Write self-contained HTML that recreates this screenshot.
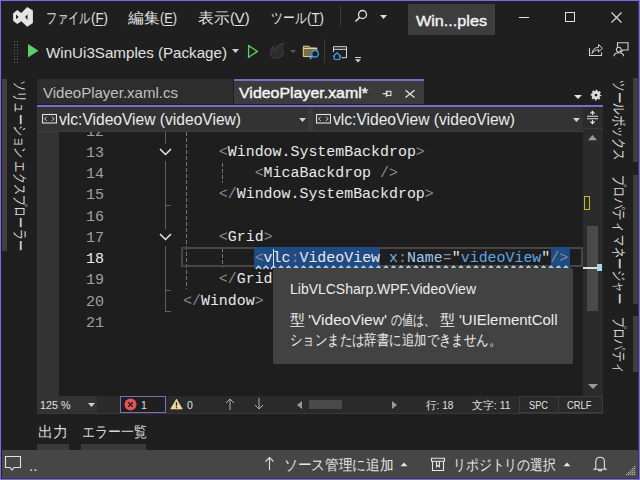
<!DOCTYPE html>
<html><head><meta charset="utf-8">
<style>
*{box-sizing:border-box;margin:0;padding:0}
html,body{width:640px;height:480px;overflow:hidden;background:#1f1f1f}
body{position:relative;font-family:"Liberation Sans",sans-serif;color:#e0e0e0}
.a{position:absolute}
.t{position:absolute;white-space:pre;line-height:1}
.f{display:inline-block;white-space:pre;transform-origin:0 50%}
.v{position:absolute;white-space:pre;line-height:1;transform-origin:0 0}
.mono{font-family:"Liberation Mono",monospace}
u{text-decoration:none;border-bottom:1px solid currentColor;line-height:0.9;display:inline-block}
</style></head><body>

<!-- TITLE BAR -->
<div class="a" style="left:0;top:0;width:640px;height:480px;border:1px solid #7d6ec0;z-index:50"></div>
<div class="a" style="left:1px;top:1px;width:638px;height:478px;border:1px solid #1d1850;border-right-color:#3a3270;border-bottom-color:#3a3270;z-index:49"></div>
<svg class="a" style="left:0;top:0" width="40" height="32" viewBox="0 0 40 32">
  <path fill="#e4e4e4" fill-rule="evenodd" d="M27.2 7 L32.9 10.5 V22.9 L27.2 26.7 L21.3 21.3 L17.2 24 L13.1 20.8 V13.5 L17.2 10 L21.3 12.9 Z M16.1 14.6 V19.2 L18.6 16.9 Z M27.5 14.3 V20 L25.1 17 Z"/>
</svg>
<div class="t" style="left:46px;top:10px;font-size:15px"><span class="f" style="width:44.50px;transform:scaleX(0.7417)">ファイル</span><span class="f" style="width:17.00px;transform:scaleX(0.8867)">(<u>F</u>)</span></div>
<div class="t" style="left:128px;top:10px;font-size:15px"><span class="f" style="width:31.50px;transform:scaleX(1.0500)">編集</span><span class="f" style="width:17.00px;transform:scaleX(0.8493)">(<u>E</u>)</span></div>
<div class="t" style="left:198px;top:10px;font-size:15px"><span class="f" style="width:31.50px;transform:scaleX(1.0500)">表示</span><span class="f" style="width:19.50px;transform:scaleX(0.9742)">(<u>V</u>)</span></div>
<div class="t" style="left:271px;top:10px;font-size:15px"><span class="f" style="width:35.50px;transform:scaleX(0.7889)">ツール</span><span class="f" style="width:17.00px;transform:scaleX(0.8867)">(<u>T</u>)</span></div>
<div class="a" style="left:340px;top:6px;width:1px;height:20px;background:#3a3a3a"></div>
<svg class="a" style="left:354px;top:9px" width="14" height="14" viewBox="0 0 14 14"><circle cx="8.5" cy="5.5" r="4" fill="none" stroke="#e0e0e0" stroke-width="1.3"/><path d="M5.6 8.4 L1.5 12.5" stroke="#e0e0e0" stroke-width="1.5"/></svg>
<svg class="a" style="left:380px;top:15px" width="8" height="5"><path d="M0 0 H7 L3.5 4 Z" fill="#e0e0e0"/></svg>
<div class="a" style="left:408px;top:4px;width:87px;height:31px;background:#3d3d3d"></div>
<div class="t" style="left:416px;top:12.7px;font-size:15.5px;-webkit-text-stroke:0.4px #f4f4f4;color:#f4f4f4"><span class="f" style="width:71.00px;transform:scaleX(1.0432)">Win...ples</span></div>
<div class="a" style="left:519px;top:17px;width:10px;height:1px;background:#e0e0e0"></div>
<div class="a" style="left:565px;top:12px;width:10px;height:10px;border:1px solid #e0e0e0"></div>
<svg class="a" style="left:611px;top:12px" width="11" height="11"><path d="M0.5 0.5 L10.5 10.5 M10.5 0.5 L0.5 10.5" stroke="#e0e0e0" stroke-width="1.1"/></svg>

<!-- TOOLBAR -->
<div class="a" style="left:13px;top:40px;width:6px;height:23px;background-image:radial-gradient(circle,#6a6a6a 0.8px,transparent 1px);background-size:3px 3px"></div>
<svg class="a" style="left:28px;top:44px" width="11" height="14"><path d="M0 0 L10.5 6.8 L0 13.5 Z" fill="#5fce6a"/></svg>
<div class="t" style="left:45.5px;top:44.7px;font-size:15.5px"><span class="f" style="width:181.00px;transform:scaleX(0.9772)">WinUi3Samples (Package)</span></div>
<svg class="a" style="left:232px;top:49px" width="8" height="5"><path d="M0 0 H7 L3.5 4 Z" fill="#d0d0d0"/></svg>
<svg class="a" style="left:0;top:30px" width="640" height="40" viewBox="0 30 640 40">
<path d="M248.6 45.6 L257.4 51.4 L248.6 57.2 Z" fill="none" stroke="#5cd05c" stroke-width="1.3" stroke-linejoin="miter"/>
<path d="M276.5 58.3 C272.5 58.3 270.3 55.5 270.3 52.5 C270.3 49.5 272 47.8 273.3 46.5 C273.3 48.6 274.2 49.6 275.2 50.2 C275.6 47 278.5 44.5 283.3 43.5 C281.3 45.5 282 48.5 283 50.8 C284.3 54.5 281.5 58.3 276.5 58.3 Z" fill="#2c2c2c" stroke="#3c3c3c" stroke-width="1.2"/>
<path d="M290 50 H296 L293 53 Z" fill="#5a5a5a"/>
<path d="M303.3 46.2 H309 L310.5 48 H316.8 V56.6 H303.3 Z" fill="#7d6d48" stroke="#ead290" stroke-width="1"/>
<path d="M303.3 48.5 H316.8" stroke="#ead290" stroke-width="1"/>
<circle cx="315" cy="53.8" r="3.3" fill="#1f1f1f" stroke="#3c9ae8" stroke-width="1.3"/>
<path d="M312.6 56.2 L309.6 59.3" stroke="#3c9ae8" stroke-width="1.4"/>
<path d="M333.5 52 V46.7 H346.5 V57.7 H341.5 M333.5 49.3 H346.5" fill="none" stroke="#d8d8d8" stroke-width="1"/>
<path d="M333 56.5 L337 52.8 L341 56.5 M334.3 55.5 V59.5 H339.7 V55.5" fill="#1f1f1f" stroke="#3c9ae8" stroke-width="1.2"/>
<path d="M355 57.5 H361" stroke="#d0d0d0" stroke-width="1"/>
<path d="M355 59.3 H361 L358 62.5 Z" fill="#d0d0d0"/>
<path d="M589.5 48 V55.5 H601.5 V52.5" fill="none" stroke="#d0d0d0" stroke-width="1.1"/>
<path d="M592 53.5 C592.5 49.5 595 47.5 598.5 47.3 V44.5 L602.5 48.3 L598.5 52 V49.6 C596 49.8 593.5 51 592 53.5 Z" fill="none" stroke="#d0d0d0" stroke-width="1"/>
<path d="M617.5 47 V42.8 H628 V50 H623 L621 52" fill="none" stroke="#d0d0d0" stroke-width="1.1"/>
<path d="M623 50 V46 H624" fill="none" stroke="#d0d0d0" stroke-width="0"/>
<circle cx="618.8" cy="49.6" r="2.4" fill="#1f1f1f" stroke="#d0d0d0" stroke-width="1.1"/>
<path d="M614 56.3 C614 53.8 616 52.8 618.8 52.8 C621.6 52.8 623.6 53.8 623.6 56.3" fill="none" stroke="#d0d0d0" stroke-width="1.1"/>
</svg>
<div class="a" style="left:324px;top:39px;width:1px;height:24px;background:#3a3a3a"></div>

<!-- LEFT SIDEBAR -->
<div class="a" style="left:2px;top:79px;width:5px;height:172px;background:#3f3f3f"></div>
<div class="v" style="left:28px;top:80px;font-size:15px;color:#d8d8d8;transform:rotate(90deg) scaleX(0.7462)">ソリューション エクスプローラー</div>

<!-- RIGHT SIDEBAR -->
<div class="a" style="left:633px;top:78px;width:5px;height:84px;background:#3f3f3f"></div>
<div class="a" style="left:633px;top:175px;width:5px;height:129px;background:#3f3f3f"></div>
<div class="a" style="left:633px;top:316px;width:5px;height:56px;background:#3f3f3f"></div>
<div class="v" style="left:627px;top:80px;font-size:15px;color:#d8d8d8;transform:rotate(90deg) scaleX(0.7714)">ツールボックス</div>
<div class="v" style="left:627px;top:175px;font-size:15px;color:#d8d8d8;transform:rotate(90deg) scaleX(0.7625)">プロパティ マネージャー</div>
<div class="v" style="left:627px;top:317px;font-size:15px;color:#d8d8d8;transform:rotate(90deg) scaleX(0.7467)">プロパティ</div>

<!-- TABS -->
<div class="a" style="left:37px;top:79px;width:196px;height:26px;background:#2d2d2d"></div>
<div class="t" style="left:43px;top:85px;font-size:15px;color:#c0c0c0"><span class="f" style="width:135.00px;transform:scaleX(1.0015)">VideoPlayer.xaml.cs</span></div>
<div class="a" style="left:234px;top:79px;width:190px;height:26px;background:#3b3b3b;border-top:2px solid #7b6ec0"></div>
<div class="t" style="left:239px;top:85px;font-size:15px;-webkit-text-stroke:0.4px #f6f6f6;color:#f6f6f6"><span class="f" style="width:129.00px;transform:scaleX(1.0620)">VideoPlayer.xaml*</span></div>
<svg class="a" style="left:0;top:80px" width="640" height="26" viewBox="0 80 640 26"><path d="M382.7 93.6 H386.4 M386.4 90.8 V96.9" fill="none" stroke="#e0e0e0" stroke-width="1.1"/><rect x="386.9" y="91.3" width="4" height="4.2" fill="none" stroke="#e0e0e0" stroke-width="1.1"/>
<path d="M405.5 90.2 L414.5 97.5 M414.5 90.2 L405.5 97.5" stroke="#e0e0e0" stroke-width="1.3"/>
<path d="M574 95 H582 L578 99 Z" fill="#e0e0e0"/>
<circle cx="596" cy="95.1" r="2.75" fill="none" stroke="#e0e0e0" stroke-width="2.6"/><circle cx="596" cy="95.1" r="4.5" fill="none" stroke="#e0e0e0" stroke-width="1.6" stroke-dasharray="1.9 1.634" stroke-dashoffset="0.95"/></svg>
<div class="a" style="left:37px;top:104px;width:566px;height:1px;background:#1c1846"></div>
<div class="a" style="left:37px;top:105px;width:566px;height:2px;background:#7b6ec0"></div>
<div class="a" style="left:37px;top:107px;width:546px;height:1px;background:#403a70"></div>

<!-- NAV BAR -->
<div class="a" style="left:37px;top:107px;width:546px;height:25px;background:#333333"></div>
<div class="a" style="left:308px;top:107px;width:5px;height:25px;background:#3a3a3a"></div>
<div class="a" style="left:37px;top:131px;width:546px;height:1px;background:#3c3c3c"></div>
<svg class="a" style="left:41px;top:113px" width="16" height="11"><rect x="1.5" y="1.5" width="14" height="8.5" fill="none" stroke="#e0e0e0" stroke-width="1.1"/><path d="M5.6 3.8 L3.6 5.8 L5.6 7.8 M11 3.8 L13 5.8 L11 7.8" fill="none" stroke="#e0e0e0" stroke-width="1"/></svg>
<div class="t" style="left:59px;top:112.3px;font-size:16px;color:#eaeaea"><span class="f" style="width:182.00px;transform:scaleX(0.9745)">vlc:VideoView (videoView)</span></div>
<svg class="a" style="left:299px;top:118px" width="8" height="5"><path d="M0 0 H7 L3.5 4 Z" fill="#d0d0d0"/></svg>
<svg class="a" style="left:315px;top:113px" width="16" height="11"><rect x="1.5" y="1.5" width="14" height="8.5" fill="none" stroke="#e0e0e0" stroke-width="1.1"/><path d="M5.6 3.8 L3.6 5.8 L5.6 7.8 M11 3.8 L13 5.8 L11 7.8" fill="none" stroke="#e0e0e0" stroke-width="1"/></svg>
<div class="t" style="left:333px;top:112.3px;font-size:16px;color:#eaeaea"><span class="f" style="width:182.00px;transform:scaleX(0.9745)">vlc:VideoView (videoView)</span></div>
<svg class="a" style="left:573px;top:118px" width="8" height="5"><path d="M0 0 H7 L3.5 4 Z" fill="#d0d0d0"/></svg>


<!-- EDITOR -->
<div class="a" style="left:37px;top:132px;width:546px;height:264px;background:#1e1e1e"></div>
<div class="a" style="left:37px;top:132px;width:22px;height:264px;background:#333333"></div>
<!-- EDITOR DECOR -->
<div class="a" style="left:165px;top:132px;width:1px;height:12px;background:#606060"></div>
<svg class="a" style="left:159px;top:148px" width="13" height="8"><path d="M1 1 L6.5 6.5 L12 1" fill="none" stroke="#e8e8e8" stroke-width="1.5"/></svg>
<div class="a" style="left:165px;top:161px;width:1px;height:68px;background:#606060"></div>
<div class="a" style="left:165px;top:205px;width:6px;height:1px;background:#606060"></div>
<svg class="a" style="left:159px;top:233px" width="13" height="8"><path d="M1 1 L6.5 6.5 L12 1" fill="none" stroke="#e8e8e8" stroke-width="1.5"/></svg>
<div class="a" style="left:165px;top:246px;width:1px;height:66px;background:#606060"></div>
<div class="a" style="left:165px;top:290px;width:6px;height:1px;background:#606060"></div>
<div class="a" style="left:165px;top:311px;width:6px;height:1px;background:#606060"></div>
<div class="a" style="left:186px;top:132px;width:1px;height:157px;background:repeating-linear-gradient(to bottom,#747474 0 4px,transparent 4px 6px)"></div>
<div class="a" style="left:222px;top:163px;width:1px;height:20px;background:repeating-linear-gradient(to bottom,#747474 0 4px,transparent 4px 6px)"></div>
<div class="a" style="left:222px;top:248px;width:1px;height:20px;background:repeating-linear-gradient(to bottom,#747474 0 4px,transparent 4px 6px)"></div>
<div class="a" style="left:181px;top:247px;width:402px;height:20px;border:2px solid #464646"></div>
<div class="a" style="left:254px;top:247px;width:126px;height:21px;background:#1f4b85"></div>
<div class="a" style="left:551px;top:247px;width:19px;height:21px;background:#1f4b85"></div>
<svg class="a" style="left:255px;top:264.5px" width="316" height="5"><defs><pattern id="sq" x="0" y="0" width="7.5" height="5" patternUnits="userSpaceOnUse"><path d="M0.8 4 L3.5 1.2 L6.2 4" fill="none" stroke="#cfe6ff" stroke-width="1.3"/></pattern></defs><rect width="316" height="5" fill="url(#sq)"/></svg>
<div class="a" style="left:273px;top:249px;width:1px;height:18px;background:#e0e0e0"></div>

<!-- CODELINES -->
<div class="a" style="left:37px;top:132px;width:546px;height:264px;overflow:hidden">
<div class="mono" style="position:absolute;left:0;width:67px;text-align:right;top:-10.45px;height:21.25px;line-height:21.25px;font-size:15px;color:#a0a0a0;">12</div>
<div class="mono" style="position:absolute;left:146px;top:-11.45px;height:21.25px;line-height:21.25px;font-size:14.93px;white-space:pre"><span style="color:#8a8a8a"></span></div>
<div class="mono" style="position:absolute;left:0;width:67px;text-align:right;top:10.80px;height:21.25px;line-height:21.25px;font-size:15px;color:#a0a0a0;">13</div>
<div class="mono" style="position:absolute;left:146px;top:9.80px;height:21.25px;line-height:21.25px;font-size:14.93px;white-space:pre"><span style="color:#e8e8e8">    </span><span style="color:#8a8a8a">&lt;</span><span style="color:#e8e8e8">Window.SystemBackdrop</span><span style="color:#8a8a8a">&gt;</span></div>
<div class="mono" style="position:absolute;left:0;width:67px;text-align:right;top:32.05px;height:21.25px;line-height:21.25px;font-size:15px;color:#a0a0a0;">14</div>
<div class="mono" style="position:absolute;left:146px;top:31.05px;height:21.25px;line-height:21.25px;font-size:14.93px;white-space:pre"><span style="color:#e8e8e8">        </span><span style="color:#8a8a8a">&lt;</span><span style="color:#e8e8e8">MicaBackdrop</span><span style="color:#8a8a8a"> /&gt;</span></div>
<div class="mono" style="position:absolute;left:0;width:67px;text-align:right;top:53.30px;height:21.25px;line-height:21.25px;font-size:15px;color:#a0a0a0;">15</div>
<div class="mono" style="position:absolute;left:146px;top:52.30px;height:21.25px;line-height:21.25px;font-size:14.93px;white-space:pre"><span style="color:#e8e8e8">    </span><span style="color:#8a8a8a">&lt;/</span><span style="color:#e8e8e8">Window.SystemBackdrop</span><span style="color:#8a8a8a">&gt;</span></div>
<div class="mono" style="position:absolute;left:0;width:67px;text-align:right;top:74.55px;height:21.25px;line-height:21.25px;font-size:15px;color:#a0a0a0;">16</div>
<div class="mono" style="position:absolute;left:0;width:67px;text-align:right;top:95.80px;height:21.25px;line-height:21.25px;font-size:15px;color:#a0a0a0;">17</div>
<div class="mono" style="position:absolute;left:146px;top:94.80px;height:21.25px;line-height:21.25px;font-size:14.93px;white-space:pre"><span style="color:#e8e8e8">    </span><span style="color:#8a8a8a">&lt;</span><span style="color:#e8e8e8">Grid</span><span style="color:#8a8a8a">&gt;</span></div>
<div class="mono" style="position:absolute;left:0;width:67px;text-align:right;top:117.05px;height:21.25px;line-height:21.25px;font-size:15px;color:#ececec;">18</div>
<div class="mono" style="position:absolute;left:146px;top:116.05px;height:21.25px;line-height:21.25px;font-size:14.93px;white-space:pre"><span style="color:#e8e8e8">        </span><span style="color:#8a8a8a">&lt;</span><span style="color:#e8e8e8">vlc</span><span style="color:#8a8a8a">:</span><span style="color:#e8e8e8">VideoView</span><span style="color:#e8e8e8"> </span><span style="color:#74aee4">x</span><span style="color:#8a8a8a">:</span><span style="color:#9ccaf0">Name</span><span style="color:#8a8a8a">=</span><span style="color:#e8e8e8">"</span><span style="color:#5aa6e8">videoView</span><span style="color:#e8e8e8">"</span><span style="color:#8a8a8a">/&gt;</span></div>
<div class="mono" style="position:absolute;left:0;width:67px;text-align:right;top:138.30px;height:21.25px;line-height:21.25px;font-size:15px;color:#a0a0a0;">19</div>
<div class="mono" style="position:absolute;left:146px;top:137.30px;height:21.25px;line-height:21.25px;font-size:14.93px;white-space:pre"><span style="color:#e8e8e8">    </span><span style="color:#8a8a8a">&lt;/</span><span style="color:#e8e8e8">Grid</span><span style="color:#8a8a8a">&gt;</span></div>
<div class="mono" style="position:absolute;left:0;width:67px;text-align:right;top:159.55px;height:21.25px;line-height:21.25px;font-size:15px;color:#a0a0a0;">20</div>
<div class="mono" style="position:absolute;left:146px;top:158.55px;height:21.25px;line-height:21.25px;font-size:14.93px;white-space:pre"><span style="color:#8a8a8a">&lt;/</span><span style="color:#e8e8e8">Window</span><span style="color:#8a8a8a">&gt;</span></div>
<div class="mono" style="position:absolute;left:0;width:67px;text-align:right;top:180.80px;height:21.25px;line-height:21.25px;font-size:15px;color:#a0a0a0;">21</div>
</div>
<!-- /CODELINES -->
<!-- SCROLLBAR -->
<div class="a" style="left:583px;top:132px;width:20px;height:264px;background:#2b2b2b"></div>
<div class="a" style="left:583px;top:107px;width:20px;height:25px;background:#2b2b2b"></div>
<div class="a" style="left:583px;top:128px;width:20px;height:1px;background:#3a3a3a"></div>
<svg class="a" style="left:0;top:100px" width="640" height="30" viewBox="0 100 640 30"><path d="M587 116.3 H598 M587 118.8 H598 M592.5 111.5 V115 M592.5 120 V123.5 M590.3 113.6 L592.5 111.4 L594.7 113.6 M590.3 121.4 L592.5 123.6 L594.7 121.4" fill="none" stroke="#e0e0e0" stroke-width="1.1"/></svg>
<svg class="a" style="left:588px;top:135px" width="10" height="6"><path d="M0 5.3 L4.5 0 L9 5.3 Z" fill="#9a9a9a"/></svg>
<div class="a" style="left:587px;top:226px;width:11px;height:85px;background:#4a4a4a"></div>
<div class="a" style="left:584px;top:196px;width:6px;height:14px;border:1.5px solid #c8b030"></div>
<div class="a" style="left:583px;top:267px;width:15px;height:2px;background:#e0e0e0"></div>
<div class="a" style="left:597px;top:264px;width:5px;height:7px;background:#a8d8f0"></div>
<svg class="a" style="left:588px;top:384px" width="10" height="6"><path d="M0 0 L5 5 L10 0 Z" fill="#9a9a9a"/></svg>


<!-- TOOLTIP -->
<div class="a" style="left:273px;top:268px;width:300px;height:96px;background:#424242;border-radius:2px"></div>
<div class="t" style="left:290px;top:280.8px;font-size:15px;color:#ececec"><span class="f" style="width:186.00px;transform:scaleX(0.9320)">LibVLCSharp.WPF.VideoView</span></div>
<div class="t" style="left:290px;top:312.5px;font-size:14.5px;color:#ececec">型</div>
<div class="t" style="left:308px;top:312.5px;font-size:14.5px;color:#ececec"><span class="f" style="width:79.00px;transform:scaleX(1.0744)">'VideoView'</span></div>
<div class="t" style="left:391px;top:312.5px;font-size:14.5px;color:#ececec"><span class="f" style="width:44.00px;transform:scaleX(0.7333)">の値は、</span></div>
<div class="t" style="left:440px;top:312.5px;font-size:14.5px;color:#ececec">型</div>
<div class="t" style="left:459px;top:312.5px;font-size:14.5px;color:#ececec"><span class="f" style="width:98.50px;transform:scaleX(1.0319)">'UIElementColl</span></div>
<div class="t" style="left:290px;top:333px;font-size:14.5px;color:#ececec"><span class="f" style="width:211.00px;transform:scaleX(0.8275)">ションまたは辞書に追加できません。</span></div>

<!-- BOTTOM EDITOR BAR -->
<div class="a" style="left:37px;top:396px;width:566px;height:17px;background:#2a2a2a"></div>
<div class="a" style="left:37px;top:396px;width:60px;height:17px;background:#333333"></div>
<div class="a" style="left:37px;top:413px;width:566px;height:1px;background:#383838"></div>
<div class="t" style="left:40px;top:400px;font-size:10.5px;color:#e0e0e0"><span class="f" style="width:30.50px;transform:scaleX(1.0241)">125 %</span></div>
<svg class="a" style="left:88px;top:403px" width="8" height="5"><path d="M0 0 H7 L3.5 4 Z" fill="#d0d0d0"/></svg>
<div class="a" style="left:120px;top:396px;width:46px;height:17px;border:1px solid #7b6ec0;background:#1f1f1f"></div>
<svg class="a" style="left:124px;top:398px" width="13" height="13"><circle cx="6.5" cy="6.5" r="6" fill="#e8505a"/><path d="M4.2 4.2 L8.8 8.8 M8.8 4.2 L4.2 8.8" stroke="#1f1f1f" stroke-width="1.3"/></svg>
<div class="t" style="left:141px;top:400px;font-size:10.5px;color:#e0e0e0">1</div>
<svg class="a" style="left:170px;top:398px" width="14" height="12"><path d="M6.5 1 L12.3 11 H0.7 Z" fill="#f0d89a" stroke="#f0d89a" stroke-width="0.6" stroke-linejoin="round"/><path d="M6.5 4.3 V7.8 M6.5 8.8 V10.2" stroke="#1f1f1f" stroke-width="1.3"/></svg>
<div class="t" style="left:187px;top:400px;font-size:10.5px;color:#e0e0e0">0</div>
<svg class="a" style="left:225px;top:398px" width="10" height="13"><path d="M5 1 V12 M1 5 L5 1 L9 5" fill="none" stroke="#b0b0b0" stroke-width="1"/></svg>
<svg class="a" style="left:254px;top:398px" width="10" height="13"><path d="M5 0 V11 M1 7 L5 11 L9 7" fill="none" stroke="#b0b0b0" stroke-width="1"/></svg>
<svg class="a" style="left:297px;top:401px" width="6" height="9"><path d="M5 0 V8 L0 4 Z" fill="#9a9a9a"/></svg>
<div class="a" style="left:309px;top:400px;width:33px;height:9px;background:#4a4a4a"></div>
<svg class="a" style="left:392px;top:401px" width="6" height="9"><path d="M0 0 V8 L5 4 Z" fill="#9a9a9a"/></svg>
<div class="t" style="left:426px;top:400px;font-size:10.5px;color:#e0e0e0"><span class="f" style="width:27.50px;transform:scaleX(0.9644)">行: 18</span></div>
<div class="t" style="left:471.5px;top:400px;font-size:10.5px;color:#e0e0e0"><span class="f" style="width:38.50px;transform:scaleX(0.9939)">文字: 11</span></div>
<div class="a" style="left:519px;top:396px;width:40px;height:17px;border:1px solid #3c3c3c"></div>
<div class="t" style="left:529px;top:400px;font-size:10.5px;color:#e0e0e0"><span class="f" style="width:19.00px;transform:scaleX(0.8799)">SPC</span></div>
<div class="a" style="left:558px;top:396px;width:45px;height:17px;border:1px solid #3c3c3c"></div>
<div class="t" style="left:567px;top:400px;font-size:10.5px;color:#e0e0e0"><span class="f" style="width:24.50px;transform:scaleX(0.8934)">CRLF</span></div>

<!-- OUTPUT TABS -->
<div class="t" style="left:38px;top:424px;font-size:15px;color:#d8d8d8">出力</div>
<div class="t" style="left:82px;top:424px;font-size:15px;color:#d8d8d8"><span class="f" style="width:64.50px;transform:scaleX(0.8600)">エラー一覧</span></div>
<div class="a" style="left:37px;top:444px;width:32px;height:6px;background:#3a3a3a"></div>
<div class="a" style="left:81px;top:444px;width:65px;height:6px;background:#3a3a3a"></div>

<!-- STATUS BAR -->
<div class="a" style="left:0;top:450px;width:640px;height:30px;background:#464646"></div>
<svg class="a" style="left:4px;top:455px" width="18" height="18"><path d="M1.5 1.5 H16.5 V12.5 H10 L8 15 L6 12.5 H1.5 Z" fill="none" stroke="#e0e0e0" stroke-width="1.1"/></svg>
<div class="t" style="left:29px;top:458px;font-size:15px;color:#e0e0e0">..</div>
<svg class="a" style="left:264px;top:456px" width="11" height="15"><path d="M5.5 1.5 V14 M1.5 5.5 L5.5 1.5 L9.5 5.5" fill="none" stroke="#e0e0e0" stroke-width="1.1"/></svg>
<div class="t" style="left:283.5px;top:457px;font-size:15px;color:#e6e6e6"><span class="f" style="width:109.50px;transform:scaleX(0.9125)">ソース管理に追加</span></div>
<svg class="a" style="left:400px;top:461.5px" width="9" height="5"><path d="M0.5 4.3 L4 0.5 L7.5 4.3 Z" fill="#e8e8e8"/></svg>
<svg class="a" style="left:0;top:450px" width="640" height="30" viewBox="0 450 640 30"><path d="M431.5 458.3 H444.5 V461.3 H431.5 Z M432.5 461.3 V470.5 H443.5 V461.3 M436.6 461.5 V466.8 L438 465.5 L439.4 466.8 V461.5" fill="none" stroke="#e6e6e6" stroke-width="1.1"/></svg>
<div class="t" style="left:452.5px;top:457px;font-size:15px;color:#e6e6e6"><span class="f" style="width:103.00px;transform:scaleX(0.8583)">リポジトリの選択</span></div>
<svg class="a" style="left:563px;top:461.5px" width="9" height="5"><path d="M0.5 4.3 L4 0.5 L7.5 4.3 Z" fill="#e8e8e8"/></svg>
<svg class="a" style="left:0;top:440px" width="640" height="40" viewBox="0 440 640 40"><path d="M595.8 467.8 V461.5 C595.8 459 597.6 457.3 600.1 457.3 C602.6 457.3 604.4 459 604.4 461.5 V467.8 L606 469.3 H594.2 Z" fill="none" stroke="#e0e0e0" stroke-width="1.1"/><path d="M598.3 469.5 C598.3 471.3 601.9 471.3 601.9 469.5" fill="none" stroke="#e0e0e0" stroke-width="1.1"/></svg>
<svg class="a" style="left:0;top:0" width="640" height="480"><rect x="634" y="466" width="1.2" height="1.2" fill="#b0b0b0"/><rect x="634" y="468" width="1.2" height="1.2" fill="#b0b0b0"/><rect x="632" y="468" width="1.2" height="1.2" fill="#b0b0b0"/><rect x="634" y="470" width="1.2" height="1.2" fill="#b0b0b0"/><rect x="632" y="470" width="1.2" height="1.2" fill="#b0b0b0"/><rect x="630" y="470" width="1.2" height="1.2" fill="#b0b0b0"/><rect x="634" y="472" width="1.2" height="1.2" fill="#b0b0b0"/><rect x="632" y="472" width="1.2" height="1.2" fill="#b0b0b0"/><rect x="630" y="472" width="1.2" height="1.2" fill="#b0b0b0"/><rect x="628" y="472" width="1.2" height="1.2" fill="#b0b0b0"/><rect x="634" y="474" width="1.2" height="1.2" fill="#b0b0b0"/><rect x="632" y="474" width="1.2" height="1.2" fill="#b0b0b0"/><rect x="630" y="474" width="1.2" height="1.2" fill="#b0b0b0"/><rect x="628" y="474" width="1.2" height="1.2" fill="#b0b0b0"/><rect x="626" y="474" width="1.2" height="1.2" fill="#b0b0b0"/><rect x="633" y="467" width="1" height="1" fill="#707070"/><rect x="633" y="469" width="1" height="1" fill="#707070"/><rect x="631" y="469" width="1" height="1" fill="#707070"/><rect x="633" y="471" width="1" height="1" fill="#707070"/><rect x="631" y="471" width="1" height="1" fill="#707070"/><rect x="629" y="471" width="1" height="1" fill="#707070"/><rect x="633" y="473" width="1" height="1" fill="#707070"/><rect x="631" y="473" width="1" height="1" fill="#707070"/><rect x="629" y="473" width="1" height="1" fill="#707070"/><rect x="627" y="473" width="1" height="1" fill="#707070"/></svg>
</body></html>
